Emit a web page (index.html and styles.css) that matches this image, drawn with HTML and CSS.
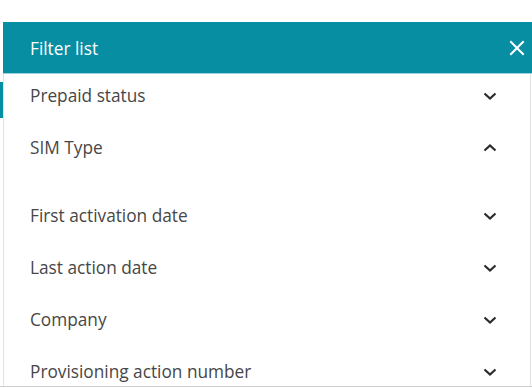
FILE: index.html
```html
<!DOCTYPE html>
<html lang="en">
<head>
    <meta charset="UTF-8">
    <meta name="viewport" content="width=device-width, initial-scale=1.0">
    <title>Filter list</title>
    <link rel="stylesheet" href="styles.css">
</head>
<body>
    <div class="filter-panel">
        <div class="filter-header">
            <span class="filter-title">Filter list</span>
            <button class="close-button" aria-label="Close">
                <svg width="16" height="16" viewBox="0 0 16 16" fill="none" stroke="currentColor" stroke-width="2" stroke-linecap="square">
                    <line x1="2" y1="2" x2="14" y2="14"></line>
                    <line x1="14" y1="2" x2="2" y2="14"></line>
                </svg>
            </button>
        </div>
        <ul class="filter-list">
            <li class="filter-item active">
                <div class="filter-row">
                    <span>Prepaid status</span>
                    <svg class="chevron" width="14" height="8" viewBox="0 0 14 8" fill="none" stroke="currentColor" stroke-width="2.2">
                        <polyline points="1.5 1.5 7 6.5 12.5 1.5"></polyline>
                    </svg>
                </div>
            </li>
            <li class="filter-item open">
                <div class="filter-row">
                    <span>SIM Type</span>
                    <svg class="chevron" width="14" height="8" viewBox="0 0 14 8" fill="none" stroke="currentColor" stroke-width="2.2">
                        <polyline points="1.5 6.5 7 1.5 12.5 6.5"></polyline>
                    </svg>
                </div>
                <div class="filter-body"></div>
            </li>
            <li class="filter-item">
                <div class="filter-row">
                    <span>First activation date</span>
                    <svg class="chevron" width="14" height="8" viewBox="0 0 14 8" fill="none" stroke="currentColor" stroke-width="2.2">
                        <polyline points="1.5 1.5 7 6.5 12.5 1.5"></polyline>
                    </svg>
                </div>
            </li>
            <li class="filter-item">
                <div class="filter-row">
                    <span>Last action date</span>
                    <svg class="chevron" width="14" height="8" viewBox="0 0 14 8" fill="none" stroke="currentColor" stroke-width="2.2">
                        <polyline points="1.5 1.5 7 6.5 12.5 1.5"></polyline>
                    </svg>
                </div>
            </li>
            <li class="filter-item">
                <div class="filter-row">
                    <span>Company</span>
                    <svg class="chevron" width="14" height="8" viewBox="0 0 14 8" fill="none" stroke="currentColor" stroke-width="2.2">
                        <polyline points="1.5 1.5 7 6.5 12.5 1.5"></polyline>
                    </svg>
                </div>
            </li>
            <li class="filter-item">
                <div class="filter-row">
                    <span>Provisioning action number</span>
                    <svg class="chevron" width="14" height="8" viewBox="0 0 14 8" fill="none" stroke="currentColor" stroke-width="2.2">
                        <polyline points="1.5 1.5 7 6.5 12.5 1.5"></polyline>
                    </svg>
                </div>
            </li>
        </ul>
    </div>
</body>
</html>
```

FILE: styles.css
```css
:root {
    --primary-color: #078ea3;
    --header-border: #9fd2db;
    --text-dark: #474747;
    --icon-dark: #2b2b2b;
    --border-color: #e2e2e2;
}

* {
    margin: 0;
    padding: 0;
    box-sizing: border-box;
    font-family: 'Open Sans', sans-serif;
}

body {
    background-color: white;
    height: 100vh;
    overflow: hidden;
    padding-top: 22px;
}

.filter-panel {
    padding-left: 3px;
    height: 365px;
    display: flex;
    flex-direction: column;
    overflow: hidden;
    border-bottom: 1px solid #cfcfcf;
}

.filter-header {
    height: 52px;
    flex-shrink: 0;
    background-color: var(--primary-color);
    border-bottom: 1px solid var(--header-border);
    display: flex;
    align-items: center;
    justify-content: space-between;
    padding: 0 7px 0 27px;
    color: white;
}

.filter-title {
    font-size: 17.25px;
    font-weight: 500;
    padding-top: 1px;
}

.close-button {
    background: none;
    border: none;
    color: white;
    width: 16px;
    height: 16px;
    display: flex;
    cursor: pointer;
}

.filter-list {
    list-style: none;
    flex: 1;
    margin-right: 1px;
    border-left: 1px solid var(--border-color);
    border-right: 1px solid var(--border-color);
}

.filter-item {
    position: relative;
}

.filter-item.active::before {
    content: "";
    position: absolute;
    left: -4px;
    top: 8px;
    width: 3px;
    height: 36px;
    background-color: var(--primary-color);
}

.filter-row {
    height: 52px;
    display: flex;
    align-items: flex-start;
    justify-content: space-between;
    padding: 10px 33px 0 26px;
    font-size: 17.25px;
    color: var(--text-dark);
}

.chevron {
    color: var(--icon-dark);
    margin-top: 8px;
}

.filter-body {
    height: 16px;
}
```
